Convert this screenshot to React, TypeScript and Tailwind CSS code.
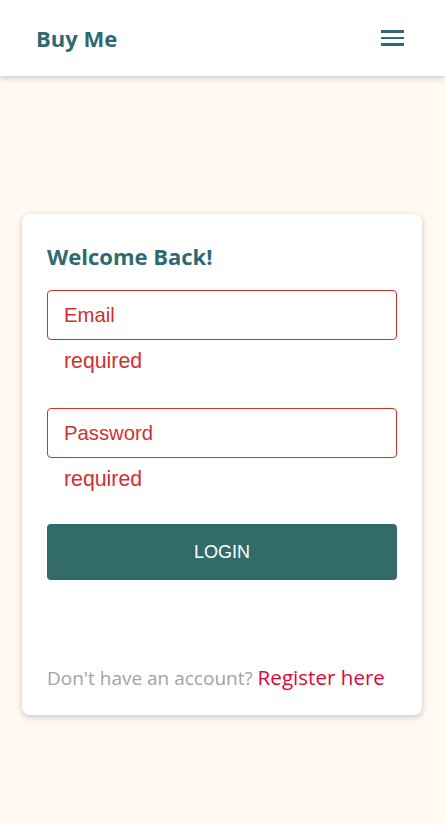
export default function App() {
  return (
    <div className="min-h-screen bg-[#fff9f2]">
      <header className="relative z-10 flex h-[76px] items-center justify-between bg-white px-9 shadow-[0_2px_6px_rgba(0,0,0,0.2)]">
        <span className="font-['Open_Sans',sans-serif] text-[22px] font-bold text-[#2f6a73]">
          Buy Me
        </span>
        <button type="button" aria-label="menu" className="mr-[5px] flex flex-col gap-[4px]">
          <span className="block h-[2.5px] w-[23px] bg-[#2f6a73]" />
          <span className="block h-[2.5px] w-[23px] bg-[#2f6a73]" />
          <span className="block h-[2.5px] w-[23px] bg-[#2f6a73]" />
        </button>
      </header>

      <main className="pl-[22px] pr-[23px] pt-[138px]">
        <div className="rounded-lg bg-white px-[25px] pb-[23px] pt-[27px] shadow-[0_2px_6px_rgba(0,0,0,0.22)]">
          <h1 className="font-['Open_Sans',sans-serif] text-[22px] font-bold leading-[30px] text-[#2f6a73]">
            Welcome Back!
          </h1>

          <form className="mt-[19px] font-['Liberation_Sans',Arial,sans-serif]">
            <input
              type="email"
              placeholder="Email"
              className="block h-[50px] w-full rounded-[4px] border border-[#d32f2f] px-4 text-[20.3px] text-[#d32f2f] outline-none placeholder:text-[#d32f2f]"
            />
            <p className="mt-[10px] pl-[17px] text-[21.3px] leading-[23px] text-[#d32f2f]">required</p>

            <input
              type="password"
              placeholder="Password"
              className="mt-[35px] block h-[50px] w-full rounded-[4px] border border-[#d32f2f] px-4 text-[20.3px] text-[#d32f2f] outline-none placeholder:text-[#d32f2f]"
            />
            <p className="mt-[10px] pl-[17px] text-[21.3px] leading-[23px] text-[#d32f2f]">required</p>

            <button
              type="button"
              className="mt-[33px] h-[56px] w-full rounded-[4px] bg-[#336b69] text-[18px] text-white"
            >
              LOGIN
            </button>
          </form>

          <p className="mt-[84px] font-['Open_Sans',sans-serif] text-[19px] leading-[27px] text-[#a3a3a3]">
            Don&apos;t have an account?{" "}
            <a href="#" className="text-[20.6px] text-[#e0063c]">
              Register here
            </a>
          </p>
        </div>
      </main>
    </div>
  );
}
